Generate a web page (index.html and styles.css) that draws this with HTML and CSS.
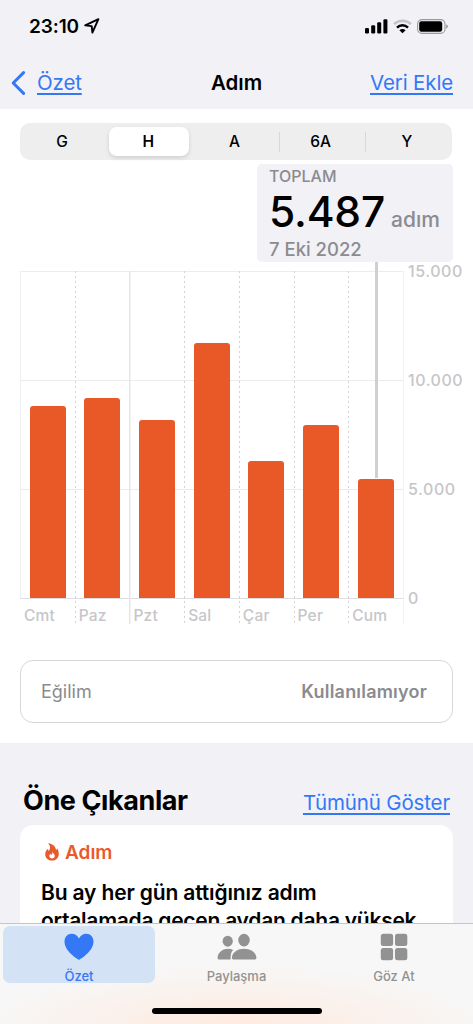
FILE: index.html
```
<!DOCTYPE html>
<html lang="tr">

<head>
    <meta charset="UTF-8">
    <meta name="viewport" content="width=device-width, initial-scale=1.0">
    <title>Adım</title>
    <link rel="stylesheet" href="styles.css">
</head>

<body>
    <div id="app">
        <header>
            <div class="status">
                <span class="time">23:10</span>
                <svg class="location" width="16" height="16" viewBox="0 0 16 16">
                    <path d="M1.2 7.4 14.4 1.2 8.4 14.6 7.7 8.1Z" fill="none" stroke="#000" stroke-width="1.9" stroke-linejoin="round" />
                </svg>
                <svg class="signal" width="23" height="15" viewBox="0 0 23 15">
                    <rect x="0" y="9" width="4" height="5.5" rx="1.2" />
                    <rect x="6.2" y="6.2" width="4" height="8.3" rx="1.2" />
                    <rect x="12.2" y="3.2" width="4" height="11.3" rx="1.2" />
                    <rect x="18.4" y="0.2" width="4" height="14.3" rx="1.2" />
                </svg>
                <svg class="wifi" width="19" height="15" viewBox="0 0 19 15">
                    <g fill="none" stroke-width="2.5">
                        <path d="M1 5.1a12.2 12.2 0 0 1 17 0" stroke="#c4c4c6" />
                        <path d="M4 8.6a7.8 7.8 0 0 1 11 0" stroke="#000" />
                    </g>
                    <path d="M9.5 14.3 6.4 11.2a4.4 4.4 0 0 1 6.2 0Z" />
                </svg>
                <svg class="battery" width="31" height="15" viewBox="0 0 31 15">
                    <rect x="0.6" y="0.6" width="27.4" height="13.8" rx="4.4" fill="none" stroke="#9b9b9d" stroke-width="1.1" />
                    <rect x="2.2" y="2.2" width="23" height="10.6" rx="2.2" />
                    <path d="M29.3 5.2v4.6q1.5-.7 1.5-2.3t-1.5-2.3Z" fill="#8b8b8d" />
                </svg>
            </div>
            <nav>
                <a class="back" href="#">
                    <svg width="15" height="26" viewBox="0 0 15 26">
                        <path d="M12.6 2.6 2.2 13 12.6 23.4" fill="none" stroke="#3478f6" stroke-width="3" stroke-linecap="round" stroke-linejoin="round" />
                    </svg>
                    <span>Özet</span>
                </a>
                <h1>Adım</h1>
                <a class="add" href="#">Veri Ekle</a>
            </nav>
        </header>

        <main>
            <section class="panel">
                <div class="segments">
                    <button>G</button>
                    <button class="active">H</button>
                    <button>A</button>
                    <button class="line">6A</button>
                    <button class="line">Y</button>
                </div>

                <div class="total">
                    <p class="caption">TOPLAM</p>
                    <p class="value"><b>5.487</b><span>adım</span></p>
                    <p class="date">7 Eki 2022</p>
                </div>

                <div class="chart">
                    <div class="plot">
                        <div class="day first"><div class="bar" style="height: 192px"></div><span>Cmt</span></div>
                        <div class="day"><div class="bar" style="height: 200px"></div><span>Paz</span></div>
                        <div class="day week"><div class="bar" style="height: 178px"></div><span>Pzt</span></div>
                        <div class="day"><div class="bar" style="height: 255px"></div><span>Sal</span></div>
                        <div class="day"><div class="bar" style="height: 137px"></div><span>Çar</span></div>
                        <div class="day"><div class="bar" style="height: 173px"></div><span>Per</span></div>
                        <div class="day"><div class="bar" style="height: 119px"></div><span>Cum</span></div>
                        <div class="marker"></div>
                    </div>
                    <div class="scale">
                        <span>15.000</span>
                        <span>10.000</span>
                        <span>5.000</span>
                        <span>0</span>
                    </div>
                </div>

                <div class="trend">
                    <span>Eğilim</span>
                    <b>Kullanılamıyor</b>
                </div>
            </section>

            <section class="highlights">
                <div class="heading">
                    <h2>Öne Çıkanlar</h2>
                    <a href="#">Tümünü Göster</a>
                </div>
                <article>
                    <h3>
                        <svg width="14" height="18" viewBox="0 0 14 18">
                            <path d="M3.2.3C8.4.9 11 4.1 11 7.3c.7-.5 1-1.2 1.1-2C13.3 7 13.8 8.9 13.8 10.7c0 4.1-2.9 6.9-6.8 6.9S.2 14.9.2 11.2C.2 8.6 1.5 6.700 3.100 5.700c-.1 1 .1 1.800.7 2.400C5.700 5.600 5.500 2.700 3.200.3Z" fill="#e95a2b" />
                            <path d="M7.5 8.600c.3 1.700 2.300 2.500 2.300 4.500 0 1.600-1.200 2.500-2.700 2.500s-2.800-1-2.800-2.500c0-1 .5-1.900 1.300-2.400 0 .7.200 1.100.7 1.400C7.300 11.200 7.600 9.900 7.500 8.600Z" fill="#fff" />
                        </svg>
                        <span>Adım</span>
                    </h3>
                    <p class="first-line">Bu ay her gün attığınız adım</p>
                    <p class="second-line">ortalamada geçen aydan daha yüksek</p>
                </article>
            </section>
        </main>

        <footer>
            <div class="tabs">
                <a class="tab active" href="#">
                    <svg width="30" height="28" viewBox="0 0 30 28">
                        <path d="M15 27C12.5 25.6.5 18 .5 8.600.5 4 3.600.8 7.700.8c3.200 0 5.800 1.700 7.300 4.600C16.500 2.500 19.100.8 22.300.8c4.100 0 7.200 3.200 7.200 7.800C29.500 18 17.500 25.600 15 27Z" fill="#3478f6" />
                    </svg>
                    <span>Özet</span>
                </a>
                <a class="tab" href="#">
                    <svg width="40" height="28" viewBox="0 0 40 28">
                        <g fill="#929292">
                            <ellipse cx="10.700" cy="8.200" rx="5.100" ry="5.500" />
                            <path d="M.6 25C.6 20.500 4.700 15.800 11 15.800c2 0 3.700.4 5.200 1.100C14.200 18.700 13.400 21.500 13.600 26.600H2.300C1.200 26.600.6 26.200.6 25Z" />
                            <ellipse cx="27" cy="7.100" rx="5.800" ry="6.300" />
                            <path d="M14.900 24.800C14.900 20.500 19.300 15.800 27 15.800S39.400 20.500 39.400 24.800c0 1.200-.7 1.800-1.900 1.800H16.800c-1.200 0-1.900-.6-1.900-1.800Z" />
                        </g>
                    </svg>
                    <span>Paylaşma</span>
                </a>
                <a class="tab" href="#">
                    <svg width="28" height="28" viewBox="0 0 28 28">
                        <g fill="#929292">
                            <rect x=".8" y=".8" width="12.3" height="12.3" rx="2.5" />
                            <rect x="15" y=".8" width="12.3" height="12.3" rx="2.5" />
                            <rect x=".8" y="15" width="12.3" height="12.3" rx="2.5" />
                            <rect x="15" y="15" width="12.3" height="12.3" rx="2.5" />
                        </g>
                    </svg>
                    <span>Göz At</span>
                </a>
            </div>
            <div class="home"></div>
        </footer>
    </div>
</body>

</html>
```
FILE: styles.css
```
* {
    margin: 0;
    padding: 0;
    box-sizing: border-box;
}

body {
    font-family: Inter, "Liberation Sans", sans-serif;
    background-color: #f1f1f6;
    color: #000;
}

svg {
    display: block;
    flex-shrink: 0;
}

#app {
    width: 473px;
    height: 1024px;
    display: flex;
    flex-direction: column;
    overflow: hidden;
}

header {
    height: 109px;
    flex-shrink: 0;
    background-color: #f1f1f6;
}

.status {
    height: 52px;
    display: flex;
    align-items: center;
    padding: 0 25px 0 29px;
}

.time {
    font-size: 19px;
    font-weight: 600;
    letter-spacing: -0.1px;
}

.location {
    margin-left: 5px;
}

.signal {
    margin-left: auto;
}

.wifi {
    margin-left: 5px;
}

.battery {
    margin-left: 5px;
}

nav {
    height: 57px;
    display: grid;
    grid-template-columns: 1fr auto 1fr;
    align-items: center;
    padding: 4px 20px 0;
}

nav a,
.heading a {
    color: #3478f6;
    font-size: 20.5px;
    letter-spacing: -0.15px;
    text-decoration: none;
}

.back {
    display: flex;
    align-items: center;
    gap: 11px;
    margin-left: -9px;
}

.back span,
.add,
.heading a {
    text-decoration: underline;
    text-decoration-thickness: 1.5px;
    text-underline-offset: 3px;
    text-decoration-skip-ink: none;
}

.add {
    justify-self: end;
}

h1 {
    font-size: 20.5px;
    font-weight: 600;
    letter-spacing: 0;
}

main {
    height: 814px;
    flex-shrink: 0;
    overflow: hidden;
}

.panel {
    height: 634px;
    padding: 14px 20px 0;
    background-color: #fff;
}

.segments {
    width: 432px;
    height: 37px;
    padding: 4px 1px 4px 0;
    display: grid;
    grid-template-columns: repeat(5, 1fr);
    background-color: #eeeeef;
    border-radius: 10px;
}

.segments button {
    padding-right: 2px;
    border: none;
    background: none;
    color: #000;
    font: 500 15.5px Inter, sans-serif;
}

.segments .active {
    margin: 0 3px;
    border-radius: 8px;
    background-color: #fff;
    font-weight: 600;
    box-shadow: 0 2px 4px rgba(0, 0, 0, 0.13);
}

.segments .line {
    background: linear-gradient(#d8d8da, #d8d8da) left center / 1px 20px no-repeat;
}

.total {
    width: 196px;
    height: 98px;
    margin: 4px 0 0 237px;
    padding: 3px 12px 0;
    border-radius: 5px;
    background-color: #f1f1f6;
    color: #8b8b90;
    white-space: nowrap;
}

.caption {
    font-size: 16px;
    font-weight: 500;
    line-height: 19px;
}

.value {
    display: flex;
    align-items: baseline;
    height: 52px;
    line-height: 52px;
}

.value b {
    color: #000;
    font-size: 42.5px;
    font-weight: 500;
    letter-spacing: -0.2px;
}

.value span {
    margin-left: 6px;
    font-size: 21px;
    font-weight: 500;
}

.date {
    font-size: 18.5px;
    font-weight: 500;
    line-height: 22px;
}

.chart {
    height: 353px;
    margin: 9px -20px 0 0;
    display: flex;
}

.plot {
    width: 384px;
    display: grid;
    grid-template-columns: repeat(7, 1fr);
    position: relative;
    border-right: 1px solid #f2f2f3;
    background:
        linear-gradient(#ececee, #ececee) 0 0 / 100% 1px no-repeat,
        linear-gradient(#ececee, #ececee) 0 109px / 100% 1px no-repeat,
        linear-gradient(#ececee, #ececee) 0 218px / 100% 1px no-repeat,
        linear-gradient(#dedee0, #dedee0) 0 327px / 100% 1px no-repeat;
}

.day {
    display: flex;
    flex-direction: column;
    padding-left: 9.5px;
    background: repeating-linear-gradient(#d3d3d5 0 2px, transparent 2px 5px) left top / 1px 100% no-repeat;
}

.day.first {
    background: linear-gradient(#eeeef0, #eeeef0) left top / 1px 327px no-repeat;
}

.day.week {
    background: linear-gradient(#e6e6e8, #e6e6e8) left top / 1.5px 100% no-repeat;
}

.bar {
    width: 36px;
    margin-top: auto;
    border-radius: 3px 3px 0 0;
    background-color: #e95928;
}

.day span {
    height: 26px;
    margin-left: -5.5px;
    font-size: 15.5px;
    font-weight: 500;
    letter-spacing: 0.2px;
    line-height: 35px;
    color: #c6c6c9;
}

/* line from the callout down to the selected bar */
.marker {
    position: absolute;
    top: -9px;
    left: 355px;
    width: 3px;
    height: 216px;
    background-color: #d0d0d2;
}

.scale {
    height: 346px;
    margin: -9px 0 0 4px;
    display: flex;
    flex-direction: column;
    justify-content: space-between;
    font-size: 16px;
    font-weight: 500;
    letter-spacing: 0.55px;
    line-height: 19px;
    color: #c6c6c9;
}

.trend {
    width: 433px;
    height: 63px;
    margin-top: 36px;
    padding: 0 25px 0 20px;
    display: flex;
    justify-content: space-between;
    align-items: center;
    border: 1.5px solid #d7d7da;
    border-radius: 13px;
    color: #8b8b8e;
    font-size: 18px;
}

.trend b {
    font-weight: 600;
    letter-spacing: 0.2px;
}

.highlights {
    padding: 39px 20px 0;
}

.heading {
    height: 43px;
    display: flex;
    justify-content: space-between;
    align-items: baseline;
    padding: 0 3px;
}

h2 {
    font-size: 27px;
    font-weight: 700;
    line-height: 38px;
    letter-spacing: -0.4px;
}

article {
    width: 433px;
    height: 200px;
    padding: 15px 21px;
    border-radius: 13px;
    background-color: #fff;
    white-space: nowrap;
}

h3 {
    height: 24px;
    display: flex;
    align-items: center;
    gap: 6px;
    padding-left: 4px;
    color: #e95a2b;
    font-size: 19px;
    font-weight: 600;
}

article p {
    font-size: 21px;
    font-weight: 600;
    line-height: 28px;
    letter-spacing: -0.15px;
}

.first-line {
    margin-top: 15px;
}

article .second-line {
    letter-spacing: -0.25px;
}

footer {
    height: 101px;
    flex-shrink: 0;
    border-top: 1px solid #c5c5c8;
    background:
        radial-gradient(ellipse 260px 70px at 50% 110%, #ffe9dd, rgba(255, 233, 221, 0)),
        #f7f7f7;
}

.tabs {
    height: 60px;
    padding: 2px 3px 0;
    display: grid;
    grid-template-columns: 152px 1fr 152px;
    column-gap: 3px;
}

.tab {
    height: 57px;
    padding-top: 7px;
    display: flex;
    flex-direction: column;
    align-items: center;
    border-radius: 7px;
    color: #929292;
    font-size: 13px;
    font-weight: 500;
    line-height: 16px;
    text-decoration: none;
}

.tab span {
    margin-top: 7px;
}

.tab.active {
    background-color: #d3e2f5;
    color: #3478f6;
}

.home {
    width: 170px;
    height: 6px;
    margin: 24px auto 0;
    border-radius: 3px;
    background-color: #000;
}
```
